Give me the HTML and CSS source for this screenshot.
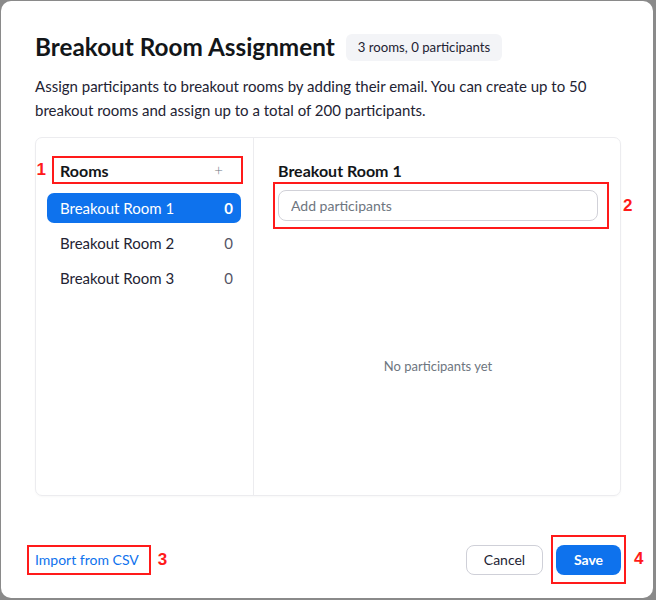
FILE: index.html
```html
<!DOCTYPE html>
<html lang="en">
<head>
<meta charset="utf-8">
<title>Breakout Room Assignment</title>
<link rel="stylesheet" href="styles.css">
</head>
<body>
<div class="dialog">
  <div class="header">
    <h1 class="title">Breakout Room Assignment</h1>
    <span class="badge">3 rooms, 0 participants</span>
  </div>
  <p class="desc">Assign participants to breakout rooms by adding their email. You can create up to 50 breakout rooms and assign up to a total of 200 participants.</p>

  <div class="panel">
    <div class="rooms">
      <div class="rooms-head anno">
        <span class="anno-num num-left">1</span>
        <span class="rooms-label">Rooms</span>
        <span class="plus">+</span>
      </div>
      <ul class="room-list">
        <li class="room active"><span>Breakout Room 1</span><span class="count">0</span></li>
        <li class="room"><span>Breakout Room 2</span><span class="count">0</span></li>
        <li class="room"><span>Breakout Room 3</span><span class="count">0</span></li>
      </ul>
    </div>
    <div class="detail">
      <div class="detail-title">Breakout Room 1</div>
      <div class="input-wrap anno">
        <input class="add-input" type="text" placeholder="Add participants">
        <span class="anno-num num-right num-2">2</span>
      </div>
      <div class="empty">No participants yet</div>
    </div>
  </div>

  <div class="footer">
    <div class="import anno">
      <a class="import-link" href="#">Import from CSV</a>
      <span class="anno-num num-right num-3">3</span>
    </div>
    <div class="actions">
      <button class="btn btn-cancel" type="button">Cancel</button>
      <div class="save-wrap anno">
        <button class="btn btn-save" type="button">Save</button>
        <span class="anno-num num-right num-4">4</span>
      </div>
    </div>
  </div>
</div>
</body>
</html>
```

FILE: styles.css
```css
* { box-sizing: border-box; }

html, body {
  margin: 0;
  padding: 0;
}

body {
  width: 656px;
  height: 600px;
  background: #8a8a8a;
  font-family: Lato, "Open Sans", sans-serif;
  color: #232333;
  overflow: hidden;
  padding: 1px 3px 2px 1px;
}

.dialog {
  position: relative;
  width: 652px;
  height: 597px;
  background: #ffffff;
  border-radius: 10px;
  padding: 32px 32px 0 34px;
  display: flex;
  flex-direction: column;
}

.header {
  display: flex;
  align-items: center;
  gap: 11px;
  height: 28px;
}

.title {
  margin: 0;
  font-size: 24.3px;
  line-height: 28px;
  font-weight: 700;
  color: #131619;
}

.badge {
  background: #f3f4f7;
  border-radius: 6px;
  padding: 0 12px;
  height: 27px;
  line-height: 27px;
  font-size: 13.2px;
  color: #232333;
}

.desc {
  margin: 13px 0 0;
  font-size: 15px;
  line-height: 24px;
  color: #232333;
}

.panel {
  margin-top: 15px;
  height: 359px;
  border: 1px solid #ececef;
  border-radius: 7px;
  display: grid;
  grid-template-columns: 218px 1fr;
  box-shadow: 0 1px 2px rgba(0,0,0,0.03);
}

.rooms {
  border-right: 1px solid #ececef;
  padding: 18px 12px 0 11px;
}

.anno {
  position: relative;
  border: 2px solid #ff1a1a;
}

.anno-num {
  position: absolute;
  top: 50%;
  transform: translateY(-50%);
  color: #ff1a1a;
  font-family: "Liberation Sans", Arial, sans-serif;
  font-weight: 700;
  font-size: 17px;
  line-height: 20px;
}

.num-left { right: calc(100% + 8px); }
.num-right { left: calc(100% + 9px); }
.num-2 { left: calc(100% + 16px); }
.num-4 { left: calc(100% + 10px); }

.rooms-head {
  display: flex;
  align-items: center;
  justify-content: space-between;
  height: 28px;
  margin: 0 -2px 0 5px;
  padding: 0 18px 0 6px;
}

.rooms-label {
  font-size: 16px;
  font-weight: 700;
  color: #131619;
}

.plus {
  font-size: 15px;
  color: #6e7680;
  font-weight: 300;
}

.room-list {
  list-style: none;
  margin: 9px 0 0;
  padding: 0;
  display: flex;
  flex-direction: column;
  gap: 5px;
}

.room {
  display: flex;
  align-items: center;
  justify-content: space-between;
  height: 30px;
  padding: 0 8px 0 13px;
  border-radius: 7px;
  font-size: 15px;
  color: #232333;
}

.room .count { color: #555566; }

.room.active {
  background: #0e72ed;
  color: #ffffff;
}

.room.active .count {
  color: #ffffff;
  font-weight: 700;
}

.detail {
  display: flex;
  flex-direction: column;
  padding: 23px 22px 0 24px;
}

.detail-title {
  font-size: 16px;
  line-height: 20px;
  font-weight: 700;
  color: #131619;
}

.input-wrap {
  margin: 1px -11px 0 -5px;
  padding: 6px 9px 6px 3px;
}

.add-input {
  display: block;
  width: 100%;
  height: 31px;
  border: 1px solid #d1d1d8;
  border-radius: 8px;
  padding: 0 12px;
  font-family: Lato, "Open Sans", sans-serif;
  font-size: 14px;
  color: #232333;
  outline: none;
}

.add-input::placeholder { color: #6e7680; }

.empty {
  flex: 1;
  display: flex;
  align-items: center;
  justify-content: center;
  padding-top: 8px;
  font-size: 13px;
  color: #6e7680;
}

.footer {
  margin-top: 48px;
  display: flex;
  align-items: center;
  justify-content: space-between;
  height: 31px;
}

.import {
  margin-left: -8px;
  height: 30px;
  padding: 0 10px 0 6px;
  display: flex;
  align-items: center;
}

.import-link {
  color: #0e72ed;
  font-size: 14px;
  text-decoration: none;
}

.actions {
  display: flex;
  align-items: center;
  gap: 8px;
}

.btn {
  font-family: Lato, "Open Sans", sans-serif;
  font-size: 14px;
  height: 30px;
  border-radius: 8px;
  cursor: pointer;
}

.btn-cancel {
  width: 77px;
  background: #ffffff;
  border: 1px solid #cfd0d8;
  color: #232333;
}

.save-wrap {
  margin: -10px -5px -9px 0;
  padding: 8px 3px 7px 3px;
}

.btn-save {
  display: block;
  width: 65px;
  height: 30px;
  background: #0e72ed;
  border: none;
  color: #ffffff;
  font-weight: 700;
}
```
